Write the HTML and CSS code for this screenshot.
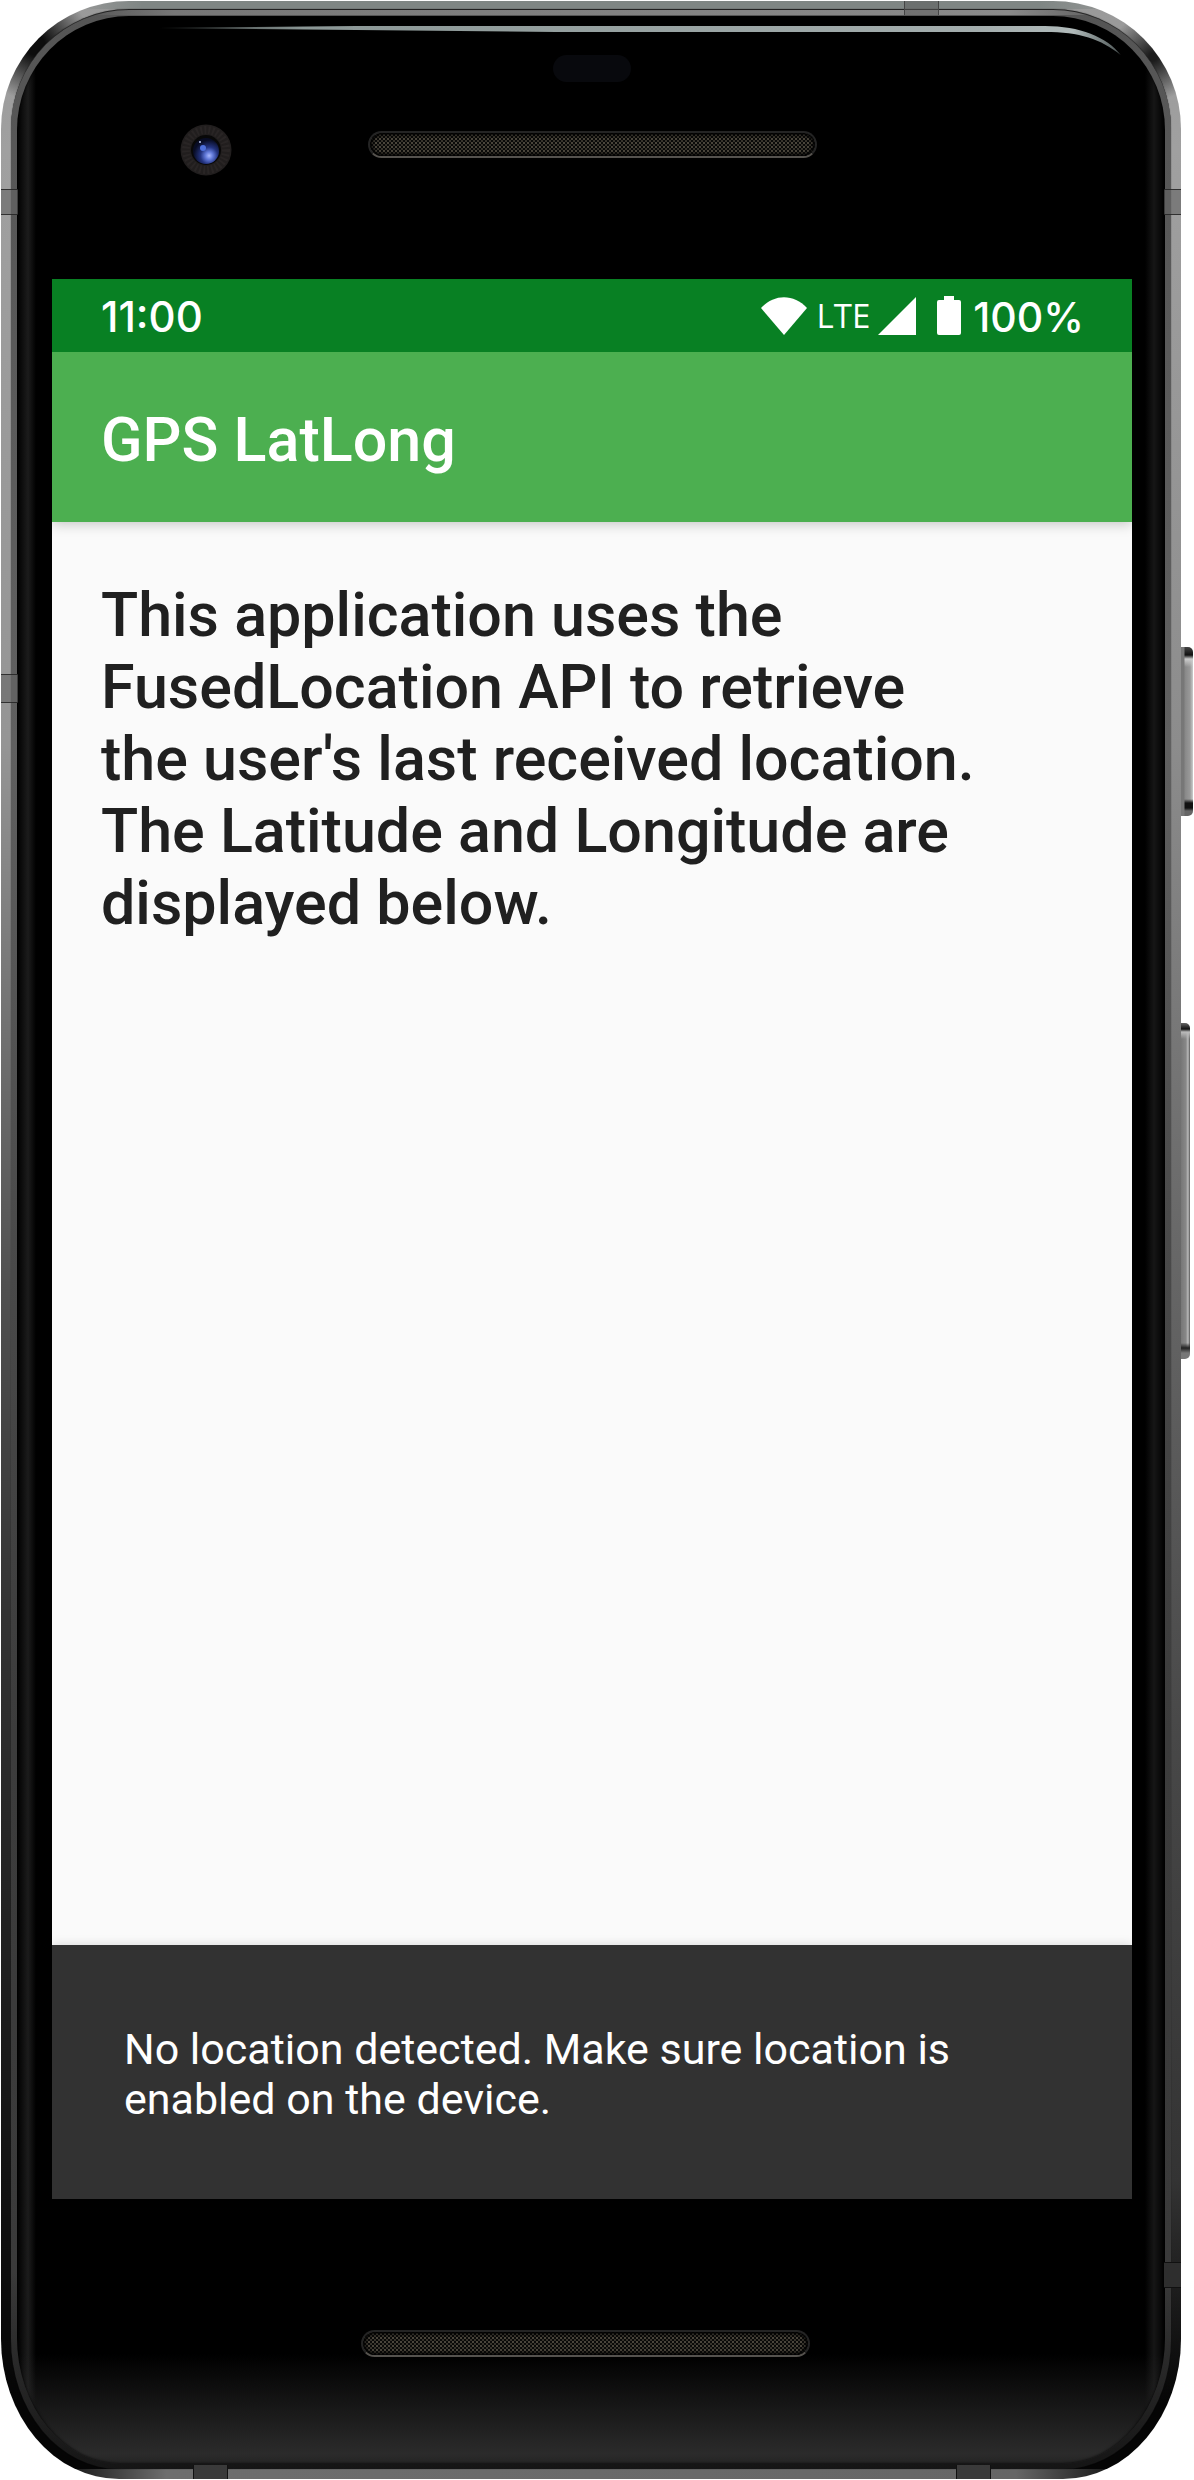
FILE: index.html
```html
<!DOCTYPE html>
<html lang="en">
<head>
<meta charset="utf-8">
<meta name="viewport" content="width=device-width, initial-scale=1">
<title>GPS LatLong</title>
<link rel="stylesheet" href="styles.css">
</head>
<body>
<div class="phone">
  <i class="key key-power"></i>
  <i class="key key-volume"></i>
  <i class="band band-left band-upper"></i>
  <i class="band band-left band-middle"></i>
  <i class="band band-right band-upper"></i>
  <i class="band band-right band-lower"></i>
  <i class="band-flat band-top"></i>
  <i class="band-flat band-bottom-left"></i>
  <i class="band-flat band-bottom-right"></i>
  <div class="rim">
    <div class="glass">
      <svg class="shine" viewBox="0 0 970 40" aria-hidden="true">
        <defs>
          <linearGradient id="shine" x1="0" x2="1" y1="0" y2="0">
            <stop offset="0" stop-color="#6f7a78" stop-opacity="0.4"/>
            <stop offset="0.15" stop-color="#8b9796"/>
            <stop offset="0.85" stop-color="#a3adad"/>
            <stop offset="0.95" stop-color="#b0baba"/>
            <stop offset="1" stop-color="#4f5858"/>
          </linearGradient>
        </defs>
        <path d="M2 3 L200 1 H890 C925 1 952 12 966 30 C946 14 925 7 890 7 H400 L200 5Z" fill="url(#shine)"/>
      </svg>
      <div class="bezel bezel-top">
        <span class="sensor"></span>
        <div class="hardware">
          <svg class="camera" viewBox="0 0 52 52" aria-hidden="true">
            <defs>
              <radialGradient id="lens" cx="0.62" cy="0.68" r="0.6">
                <stop offset="0" stop-color="#a9b8ff"/>
                <stop offset="0.25" stop-color="#6078d8"/>
                <stop offset="0.55" stop-color="#23337f"/>
                <stop offset="1" stop-color="#080c24"/>
              </radialGradient>
            </defs>
            <circle cx="26" cy="26" r="25.500" fill="#211e1e"/>
            <circle cx="26" cy="26" r="20" fill="none" stroke="#292525" stroke-width="8" stroke-dasharray="2 2"/>
            <circle cx="26" cy="26" r="15" fill="#080808"/>
            <circle cx="26" cy="27" r="13" fill="url(#lens)"/>
            <circle cx="23" cy="24" r="3" fill="#4e70dc"/>
            <circle cx="20" cy="18" r="1" fill="#b9c4ee"/>
          </svg>
          <span class="grille"></span>
        </div>
      </div>

      <div class="screen">
        <div class="status-bar">
          <span class="clock">11:00</span>
          <div class="indicators">
            <svg class="wifi" viewBox="0 0 46 38" role="img" aria-label="Wi-Fi"><path d="M23 38 L0 11 C13 -3.500 33 -3.500 46 11Z" fill="#fff"/></svg>
            <span class="network">LTE</span>
            <svg class="signal" viewBox="0 0 38 38" role="img" aria-label="Signal"><path d="M38 0V38H0Z" fill="#fff"/></svg>
            <svg class="battery" viewBox="0 0 24 39" role="img" aria-label="Battery"><path d="M7 0H17V4H22Q24 4 24 6V37Q24 39 22 39H2Q0 39 0 37V6Q0 4 2 4H7Z" fill="#fff"/></svg>
            <span class="percent">100%</span>
          </div>
        </div>
        <header class="app-bar"><h1>GPS LatLong</h1></header>
        <main class="content">
          <p>This application uses the FusedLocation API to retrieve the user's last received location. The Latitude and Longitude are displayed below.</p>
        </main>
        <div class="snackbar" role="status">
          <p>No location detected. Make sure location is enabled on the device.</p>
        </div>
      </div>

      <div class="bezel bezel-bottom"><span class="grille"></span></div>
    </div>
  </div>
</div>
</body>
</html>
```
FILE: styles.css
```css
* { box-sizing: border-box; }

body {
  margin: 0;
  background: #fff;
  font-family: Roboto, "Liberation Sans", sans-serif;
}

h1, p { margin: 0; }

/* Metal body */
.phone {
  position: relative;
  display: flex;
  min-height: calc(100vh - 2px);
  margin: 1px 13px 1px 1px;
  padding: 8px 10px 10px;
  border-radius: 128px 128px 118px 118px / 128px 128px 140px 140px;
  background:
    radial-gradient(circle at 34px 44px, #0c0c0c 10px, transparent 56px),
    radial-gradient(circle at calc(100% - 28px) 56px, #1c1c1c 4px, transparent 44px),
    linear-gradient(90deg, transparent 4%, #6e6e6e 14%, #666 86%, transparent 96%) bottom / 100% 10px no-repeat,
    linear-gradient(90deg, transparent 6%, #7f8684 12%, #7f8684 88%, transparent 96%) top / 100% 8px no-repeat,
    linear-gradient(#999, #a0a0a0 6%, #999 20%, #959595 30%, #505050 52%, #333 65%, #1e1e1e 80%, #050505 97%) left / 50% 100% no-repeat,
    linear-gradient(#999, #a0a0a0 6%, #8c8c8c 30%, #686868 50%, #484848 70%, #333 88%, #050505 97%) right / 50% 100% no-repeat;
}

.rim {
  display: flex;
  flex: 1;
  min-width: 0;
  padding: 6px 6px 5px;
  border-top: 1px solid #222;
  border-radius: 118px 118px 108px 108px / 120px 120px 130px 130px;
  background:
    linear-gradient(90deg, transparent 6%, #777 14%, #8a8a8a 86%, transparent 96%) top / 100% 5px no-repeat,
    linear-gradient(#555, #606060 30%, #4a4a4a 50%, #3c3c3c 70%, #3a3a3a 92%, #151515);
  box-shadow: 0 0 1px rgba(20, 20, 20, 0.9);
}

.glass {
  position: relative;
  display: flex;
  flex: 1;
  flex-direction: column;
  min-width: 0;
  padding: 0 33px 0 35px;
  border-radius: 112px 112px 104px 104px / 114px 114px 126px 126px;
  background:
    linear-gradient(transparent calc(100% - 110px), #2b2b2b calc(100% - 10px), #242424),
    linear-gradient(90deg, #000, #1c1c1c 11px, #000 19px, #000 calc(100% - 20px), #161616 calc(100% - 11px), #000);
  box-shadow: inset 0 0 3px #000;
}

.shine {
  position: absolute;
  top: 9px;
  right: 40px;
  left: 140px;
}

/* Antenna bands and side keys */
.band, .band-flat, .key { position: absolute; }
.band, .band-flat { z-index: 1; }

.band {
  width: 17px;
  height: 26px;
  border: solid rgba(30, 30, 30, 0.8);
  border-width: 1px 0;
  background: rgba(100, 100, 100, 0.6);
}

.band-left { left: 0; }
.band-right { right: 0; }
.band-upper { top: 188px; }
.band-middle { top: 673px; height: 29px; }
.band-lower { top: 2261px; background: #2e2e2e; border-color: #111; }

.band-flat {
  width: 35px;
  height: 14px;
  border: solid #444;
  border-width: 0 1px;
  background: rgba(90, 90, 90, 0.5);
}

.band-top { top: 0; right: 242px; }
.band-bottom-left { bottom: 0; left: 192px; background: #3a3a3a; border-color: #111; }
.band-bottom-right { bottom: 0; right: 190px; background: #3a3a3a; border-color: #111; }

.key {
  left: 100%;
  border-radius: 0 5px 5px 0;
}

.key-power {
  top: 646px;
  width: 12px;
  height: 169px;
  background:
    linear-gradient(90deg, #777 3px, transparent 4px),
    linear-gradient(#444, #111 8px, #ccc 12px, transparent 20px, transparent 152px, #111 156px, #111 161px, #666 164px),
    linear-gradient(90deg, #888 4px, #999 9px, #ccc);
}

.key-volume {
  top: 1022px;
  width: 9px;
  height: 336px;
  background:
    linear-gradient(#666, #111 6px, #bbb 9px, transparent 16px, transparent 320px, #222 325px, #777 330px),
    linear-gradient(90deg, #777, #888 5px, #bbb 7px, #555);
}

/* Bezels */
.bezel {
  display: flex;
  flex-direction: column;
  align-items: center;
}

.bezel-top { height: 263px; padding-top: 39px; }
.bezel-bottom { height: 265px; padding: 131px 14px 0 0; }

.sensor {
  width: 78px;
  height: 27px;
  border-radius: 14px;
  background: #08090d;
}

.hardware {
  display: grid;
  grid-template-columns: 1fr auto 1fr;
  align-items: start;
  width: 100%;
  margin-top: 42px;
}

.camera {
  width: 52px;
  height: 52px;
  margin-left: 128px;
}

.grille {
  width: 449px;
  height: 27px;
  margin-top: 7px;
  border: 2px solid #242424;
  border-bottom-color: #55524e;
  border-radius: 14px;
  background:
    radial-gradient(circle, #4a453b 1px, transparent 1px) 0 0 / 4px 4px,
    radial-gradient(circle, #38342c 1px, transparent 1px) 2px 2px / 4px 4px,
    #0a0a09;
  box-shadow: inset 0 0 3px 2px #000;
}

.bezel-bottom .grille { margin-top: 0; }

/* Screen */
.screen {
  display: flex;
  flex: 1;
  flex-direction: column;
  background: #fafafa;
}

.status-bar {
  display: flex;
  align-items: center;
  justify-content: space-between;
  height: 73px;
  padding: 0 48px 0 49px;
  background: #088023;
  color: #fff;
}

.clock, .percent {
  padding-top: 2px;
  font-family: Inter, Roboto, sans-serif;
  font-size: 42px;
  font-weight: 500;
  line-height: 48px;
}

.percent { font-size: 41px; }

.indicators {
  display: flex;
  align-items: center;
}

.wifi { width: 46px; height: 38px; }

.network {
  margin: 0 8px 0 10px;
  font-family: "Open Sans", sans-serif;
  font-size: 33px;
  line-height: 40px;
}

.signal { width: 38px; height: 38px; }
.battery { width: 24px; height: 39px; margin: 0 12px 0 21px; }

.app-bar {
  z-index: 1;
  display: flex;
  align-items: center;
  height: 170px;
  padding: 6px 49px 0;
  background: #4caf50;
  box-shadow: 0 2px 12px rgba(0, 0, 0, 0.22);
  clip-path: inset(0 0 -20px 0);
  color: #fff;
}

.app-bar h1 {
  font-size: 61px;
  font-weight: 500;
  line-height: 72px;
}

.content {
  flex: 1;
  padding: 57px 136px 56px 49px;
  color: #202020;
  font-size: 61px;
  font-weight: 500;
  line-height: 72px;
}

.snackbar {
  padding: 79px 72px 75px;
  background: #323232;
  box-shadow: 0 0 10px rgba(0, 0, 0, 0.15);
  clip-path: inset(-10px 0 0 0);
  color: #fff;
  font-size: 43px;
  line-height: 50px;
}
```
